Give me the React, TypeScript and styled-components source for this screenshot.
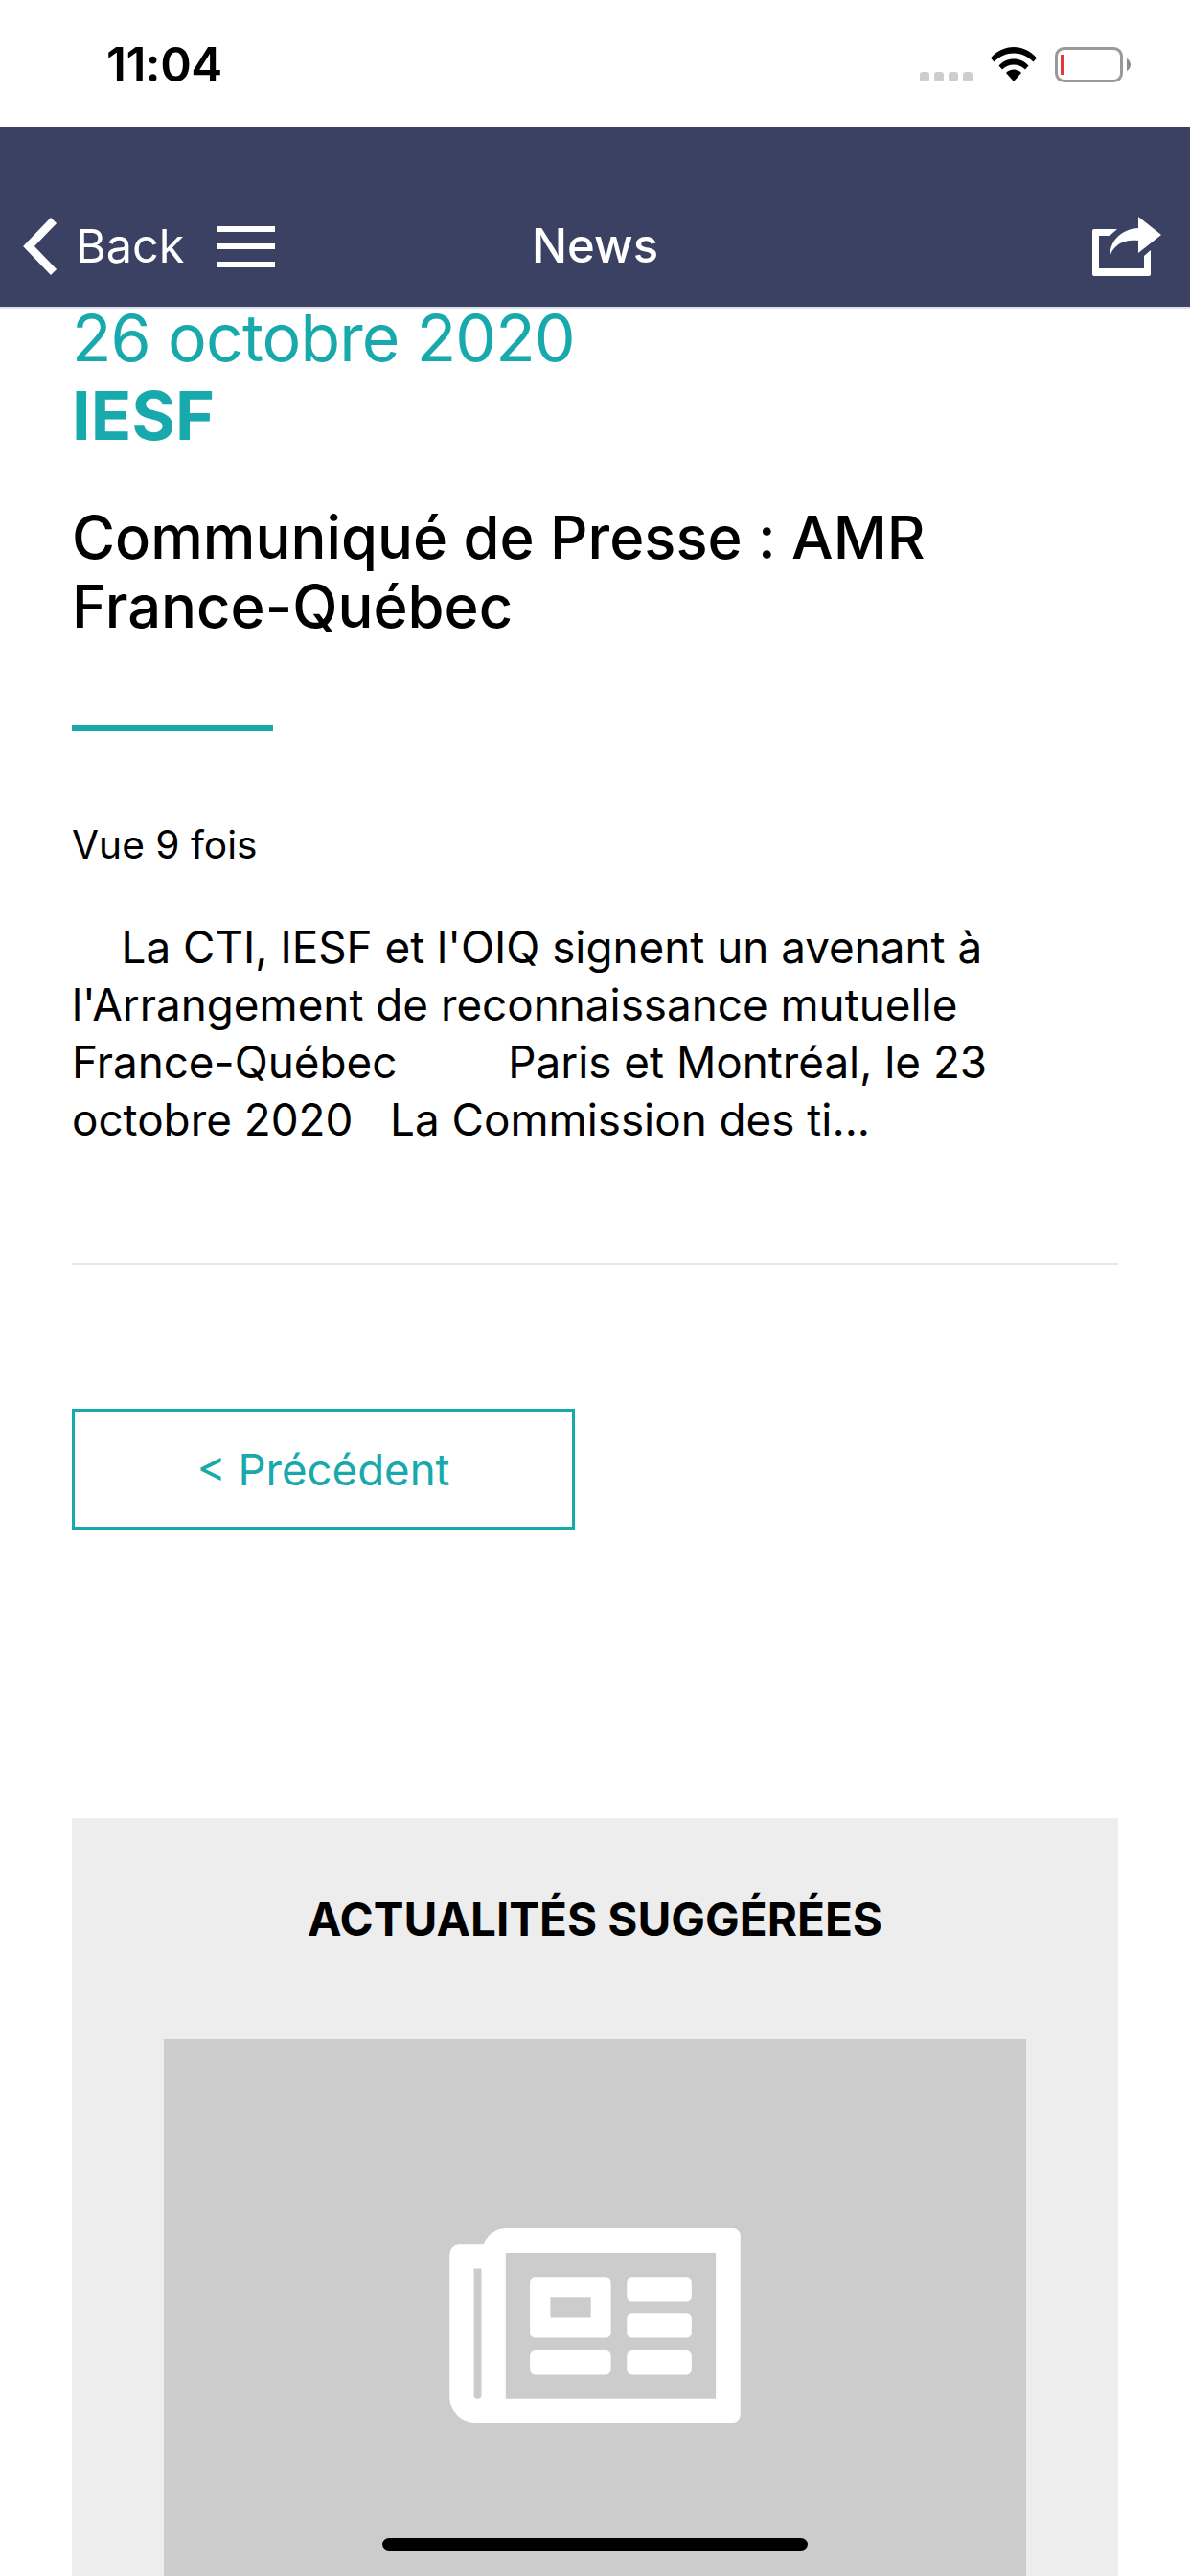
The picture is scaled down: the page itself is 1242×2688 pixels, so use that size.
import styled, { createGlobalStyle } from 'styled-components';

const GlobalStyle = createGlobalStyle`
  html, body {
    margin: 0;
    padding: 0;
    background: #fff;
  }
  * {
    box-sizing: border-box;
  }
`;

const Screen = styled.div`
  position: relative;
  width: 1242px;
  height: 2688px;
  overflow: hidden;
  background: #fff;
  font-family: Inter, 'Liberation Sans', sans-serif;
  font-feature-settings: 'calt' 0;
  color: #000;
`;

const StatusBar = styled.div`
  height: 132px;
  display: flex;
  align-items: flex-start;
  padding: 0 62px 0 111px;
`;

const Time = styled.div`
  font-size: 49.5px;
  line-height: 57px;
  font-weight: 600;
  margin-top: 39px;
  letter-spacing: -0.5px;
`;

const StatusIcons = styled.div`
  margin-left: auto;
  display: flex;
  align-items: flex-start;
  padding-top: 49px;
`;

const Dots = styled.div`
  display: flex;
  gap: 5px;
  margin: 26px 19px 0 0;
`;

const Dot = styled.span`
  width: 10px;
  height: 10px;
  border-radius: 3px;
  background: #cdcdcd;
`;

const Battery = styled.svg`
  margin-left: 19px;
`;

const NavBar = styled.header`
  height: 190px;
  background: #3a4163;
  border-bottom: 2px solid #dfe2ec;
  display: grid;
  grid-template-columns: 1fr auto 1fr;
  align-items: center;
  padding: 62px 30px 0 30px;
  color: #fff;
`;

const NavLeft = styled.div`
  display: flex;
  align-items: center;
  margin-left: -6px;
`;

const BackLabel = styled.span`
  font-size: 48.5px;
  line-height: 60px;
  margin-left: 18px;
`;

const MenuIcon = styled.div`
  width: 60px;
  height: 43px;
  margin-left: 35px;
  display: flex;
  flex-direction: column;
  justify-content: space-between;

  span {
    height: 6px;
    background: #fff;
  }
`;

const NavTitle = styled.div`
  font-size: 49px;
  line-height: 60px;
  font-weight: 500;
`;

const NavRight = styled.div`
  display: flex;
  justify-content: flex-end;
`;

const Content = styled.main`
  padding: 0 75px;
`;

const DateLine = styled.div`
  font-size: 68px;
  line-height: 80px;
  margin-top: -10px;
  letter-spacing: -0.9px;
  color: #17a9ab;
`;

const Source = styled.div`
  font-size: 70px;
  line-height: 84px;
  font-weight: 700;
  color: #17a9ab;
`;

const Title = styled.h1`
  margin: 49px 0 0;
  font-size: 61.5px;
  line-height: 72px;
  font-weight: 500;
`;

const Rule = styled.div`
  width: 210px;
  height: 6px;
  margin-top: 88px;
  background: #17a9ab;
`;

const Views = styled.div`
  margin-top: 95px;
  font-size: 40.7px;
  line-height: 48px;
`;

const Excerpt = styled.p`
  margin: 53px 0 0;
  font-size: 45.8px;
  line-height: 60px;
  white-space: pre-wrap;
`;

const Divider = styled.hr`
  margin: 119px 0 0;
  border: 0;
  height: 2px;
  background: #e8e8e8;
`;

const PrevButton = styled.button`
  display: block;
  width: 525px;
  height: 126px;
  margin-top: 150px;
  background: #fff;
  border: 3px solid #17a9ab;
  color: #17a9ab;
  font-family: inherit;
  font-size: 45.6px;
`;

const Suggested = styled.section`
  margin-top: 301px;
  background: #ededed;
  padding: 78px 96px 0;
`;

const SuggestedTitle = styled.h2`
  margin: 0;
  text-align: center;
  font-size: 47.6px;
  line-height: 56px;
  font-weight: 700;
`;

const Thumb = styled.div`
  height: 600px;
  margin-top: 97px;
  background: #cccccc;
  display: flex;
  justify-content: center;
  padding-top: 197px;
`;

const HomeIndicator = styled.div`
  position: absolute;
  left: 399px;
  bottom: 26px;
  width: 444px;
  height: 14px;
  border-radius: 7px;
  background: #000;
`;

const WifiIcon = () => (
  <svg width="48" height="36" viewBox="0 0 48 36">
    <path
      fill="#000"
      d="M0 11.5C6.5 4 15 0 24 0s17.500 4 24 11.500l-3.500 4C38.500 9.500 31.500 6.500 24 6.500S9.500 9.500 3.500 15.500z"
    />
    <path
      fill="#000"
      d="M8.500 19.500C12.500 15 18 12.500 24 12.500s11.500 2.500 15.500 7l-3.500 4C32.500 20 28.500 18.500 24 18.500S15.500 20 12 23.500z"
    />
    <path fill="#000" d="M16 27c2-2 5-3.500 8-3.500s6 1.500 8 3.500l-8 9z" />
  </svg>
);

const BatteryIcon = () => (
  <Battery width="79" height="37" viewBox="0 0 79 37">
    <rect
      x="1.500"
      y="1.500"
      width="68"
      height="34"
      rx="8"
      fill="none"
      stroke="#999"
      strokeWidth="3"
    />
    <rect x="6" y="8" width="3" height="21" fill="#e53935" />
    <path fill="#8c8c8c" d="M75 12c2.500 1.500 4 4 4 6.500s-1.500 5-4 6.500z" />
  </Battery>
);

const ChevronIcon = () => (
  <svg width="37" height="60" viewBox="0 0 37 60">
    <path d="M32 3 L6 30 L32 57" fill="none" stroke="#fff" strokeWidth="8.500" />
  </svg>
);

const ShareIcon = () => (
  <svg width="72" height="62" viewBox="0 0 72 62">
    <path
      fill="#fff"
      fillRule="evenodd"
      d="M2 13h24l-8 7H7v34h47V41l7-6v25a2 2 0 0 1-2 2H2a2 2 0 0 1-2-2V15a2 2 0 0 1 2-2z"
    />
    <path
      fill="#fff"
      d="M48 0l24 19-24 19V25c-12-1-26 2-30 18 0-19 13-30 30-31z"
    />
  </svg>
);

const NewspaperIcon = () => (
  <svg width="304" height="203" viewBox="0 0 912 610">
    <path
      fill="#fff"
      fillRule="evenodd"
      d="M176 0H888a24 24 0 0 1 24 24V586a24 24 0 0 1-24 24H80A80 80 0 0 1 0 530V82a30 30 0 0 1 30-30H106A76 76 0 0 1 176 0z
         M176 78V534H835V78z
         M76 128V522a12 12 0 0 0 24 0V128z"
    />
    <path
      fill="#fff"
      fillRule="evenodd"
      d="M268 154H490a16 16 0 0 1 16 16V328a16 16 0 0 1-16 16H268a16 16 0 0 1-16-16V170a16 16 0 0 1 16-16z
         M316 217V281H443V217z"
    />
    <rect x="556" y="154" width="203" height="76" rx="16" fill="#fff" />
    <rect x="556" y="268" width="203" height="76" rx="16" fill="#fff" />
    <rect x="252" y="382" width="254" height="76" rx="16" fill="#fff" />
    <rect x="556" y="382" width="203" height="76" rx="16" fill="#fff" />
  </svg>
);

const App = () => {
  return (
    <Screen>
      <GlobalStyle />
      <StatusBar>
        <Time>11:04</Time>
        <StatusIcons>
          <Dots>
            {[0, 1, 2, 3].map((i) => (
              <Dot key={i} />
            ))}
          </Dots>
          <WifiIcon />
          <BatteryIcon />
        </StatusIcons>
      </StatusBar>
      <NavBar>
        <NavLeft>
          <ChevronIcon />
          <BackLabel>Back</BackLabel>
          <MenuIcon>
            <span />
            <span />
            <span />
          </MenuIcon>
        </NavLeft>
        <NavTitle>News</NavTitle>
        <NavRight>
          <ShareIcon />
        </NavRight>
      </NavBar>
      <Content>
        <DateLine>26 octobre 2020</DateLine>
        <Source>IESF</Source>
        <Title>
          Communiqué de Presse : AMR
          <br />
          France-Québec
        </Title>
        <Rule />
        <Views>Vue 9 fois</Views>
        <Excerpt>
          {"\u00a0\u00a0\u00a0\u00a0La CTI, IESF et l'OIQ signent un avenant à"}
          <br />
          {"l'Arrangement de reconnaissance mutuelle"}
          <br />
          {'France-Québec \u00a0\u00a0\u00a0\u00a0\u00a0\u00a0\u00a0\u00a0Paris et Montréal, le 23'}
          <br />
          {'octobre 2020 \u00a0\u00a0La Commission des ti...'}
        </Excerpt>
        <Divider />
        <PrevButton>{'< Précédent'}</PrevButton>
        <Suggested>
          <SuggestedTitle>ACTUALITÉS SUGGÉRÉES</SuggestedTitle>
          <Thumb>
            <div>
              <NewspaperIcon />
            </div>
          </Thumb>
        </Suggested>
      </Content>
      <HomeIndicator />
    </Screen>
  );
};

export default App;
